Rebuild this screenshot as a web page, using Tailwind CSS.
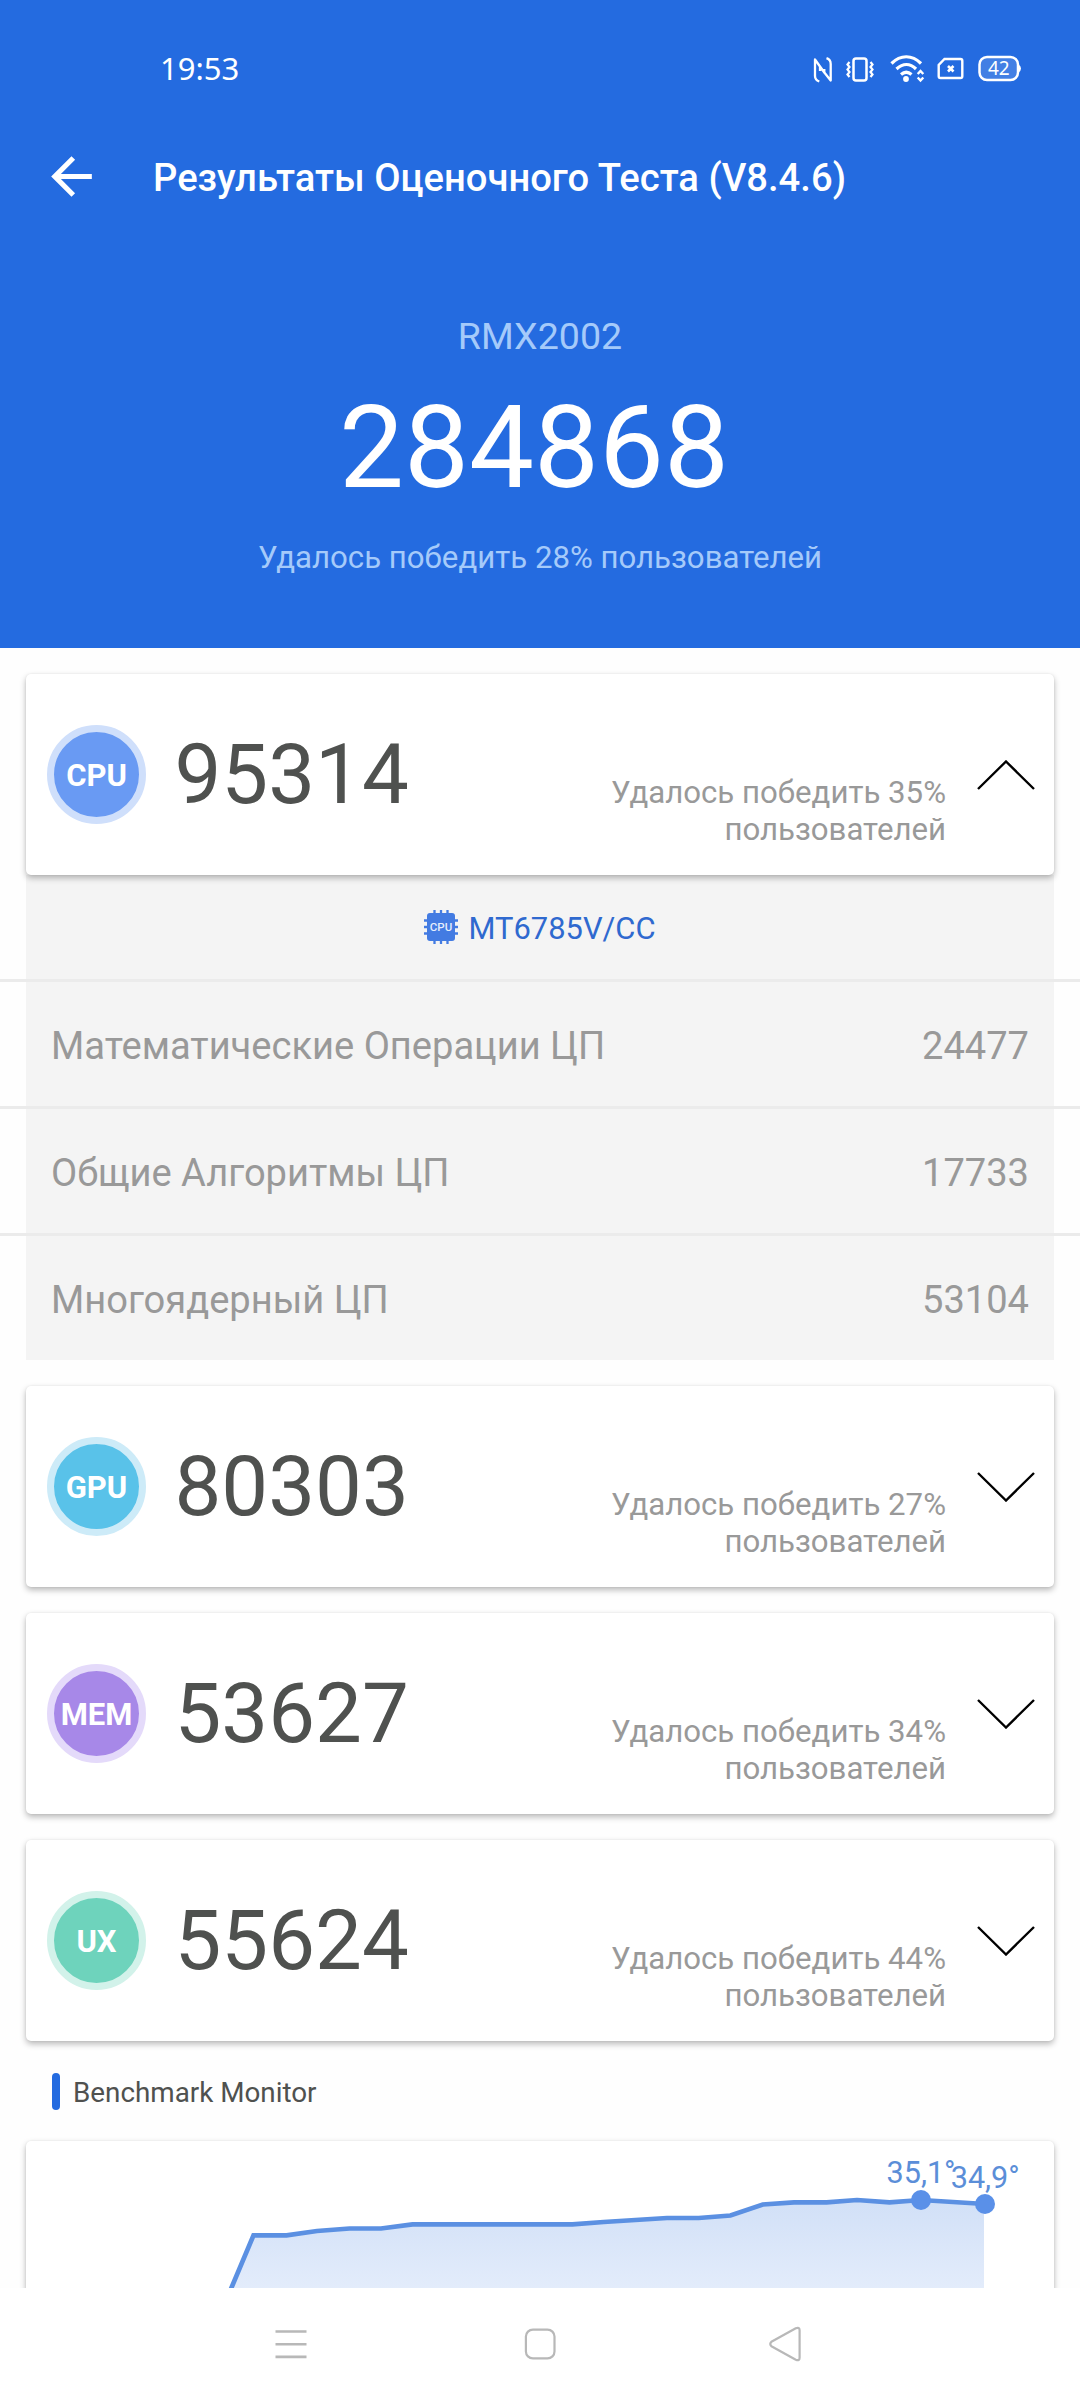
<!DOCTYPE html>
<html lang="ru">
<head>
<meta charset="utf-8">
<title>Результаты Оценочного Теста</title>
<script src="https://cdn.jsdelivr.net/npm/@tailwindcss/browser@4"></script>
</head>
<body class="bg-white font-['Roboto',sans-serif]">
<div class="flex h-[2400px] w-[1080px] flex-col overflow-hidden">
  <main class="h-[2288px] overflow-hidden bg-[#fefefe]">
    <header class="flex h-[648px] flex-col bg-[#246be0] text-white">
      <!-- Status bar -->
      <div class="flex h-[138px] items-center justify-between pr-[56px] pl-[160px]">
        <span class="pb-[2px] font-['Noto_Sans',sans-serif] text-[31px] leading-[40px]">19:53</span>
        <svg width="214" height="34" viewBox="810 52 214 34" fill="none" stroke="#fff" stroke-width="2">
          <path d="M819.300 81.500C816.500 80.500 815 79 815 76V59.500L824.300 72.500V69M826.500 58.200C829.300 59.200 830.700 61 830.700 64V80.500L820 67V71" stroke-width="2.300" stroke-linejoin="round"/>
          <rect x="853.500" y="58.500" width="13" height="22" rx="2.500" stroke-width="2.500"/>
          <path d="M849.500 62L847.500 64.500L849.500 67L847.500 69.500L849.500 72L847.500 74.500L849.500 77M870.500 62L872.500 64.500L870.500 67L872.500 69.500L870.500 72L872.500 74.500L870.500 77" stroke-width="2.200"/>
          <path d="M891.500 63.500C900.500 54.500 912 54.500 921 63.500M896.500 69C903 63 910 63 916 69M901 74.500C904.500 71.500 908 71.500 911.500 74.500" stroke-width="3.200"/>
          <circle cx="906" cy="79" r="2.900" fill="#fff" stroke="none"/>
          <path d="M917.700 74L920.500 71L923.300 74M917.700 77.500L920.500 80.500L923.300 77.500" stroke-width="2.400"/>
          <path d="M944.500 59H960.500Q962.300 59 962.300 60.800V76.200Q962.300 78 960.500 78H940.500Q938.700 78 938.700 76.200V65Z" stroke-width="2.400"/>
          <path d="M948 66L953.500 71.500M953.500 66L948 71.500" stroke-width="2.600"/>
          <rect x="979.500" y="57" width="38.500" height="23" rx="7.500" fill="#fff" fill-opacity=".14" stroke-width="2.500"/>
          <path d="M1018.500 64.500Q1021 66 1021 68.500T1018.500 72.500Z" fill="#fff" stroke="none"/>
          <text x="998.800" y="75.300" text-anchor="middle" font-family="Noto Sans, sans-serif" font-size="19" fill="#fff" stroke="none">42</text>
        </svg>
      </div>
      <!-- App bar -->
      <div class="flex h-[76px] items-center pl-[41px]">
        <svg class="size-[61px]" viewBox="0 0 24 24" fill="#fff"><path d="M20 11H7.830l5.590-5.590L12 4l-8 8 8 8 1.410-1.410L7.830 13H20v-2z"/></svg>
        <h1 class="pt-1 pl-[51px] text-[38.2px] leading-[46px] font-medium">Результаты Оценочного Теста (V8.4.6)</h1>
      </div>
      <!-- Total score -->
      <div class="flex flex-col items-center pt-[100px]">
        <p class="text-[37.6px] leading-[44px] text-[#a5cafa]">RMX2002</p>
        <p class="mt-[22px] pr-3 text-[115.7px] leading-[136px]">284868</p>
        <p class="mt-[23px] text-[31.2px] leading-[37px] text-[#a5cafa]">Удалось победить 28% пользователей</p>
      </div>
    </header>

    <section class="pt-[26px]">
      <article class="relative mx-[26px] flex h-[201px] items-center rounded-[5px] bg-white pr-[19.5px] pl-[20.5px] shadow-[0_3px_6px_rgba(0,0,0,0.28),0_0_2px_rgba(0,0,0,0.08)]">
        <div class="flex size-[99px] items-center justify-center rounded-full border-[7.5px] border-[#cfdffb] bg-[#699af3] pt-[3px] pl-px text-[31px] font-bold text-white">CPU</div>
        <div class="pl-[29px] text-[83.4px] leading-[98px] text-[#4f514f]">95314</div>
        <p class="mb-[27px] ml-auto self-end text-right text-[31.2px] leading-[37px] text-[#999]">Удалось победить 35%<br>пользователей</p>
        <svg class="ml-[30.5px]" width="58" height="30" viewBox="0 0 58 30" fill="none" stroke="#000" stroke-width="2.400"><path d="M1 29L29 1.500L57 29"/></svg>
      </article>

      <div class="bg-[linear-gradient(to_right,transparent_26px,#f4f4f4_26px,#f4f4f4_1054px,transparent_1054px)]">
        <div class="flex h-[104px] items-center justify-center gap-[10px]">
          <svg width="34" height="34" viewBox="0 0 34 34">
            <path d="M10.500 0V34M17 0V34M23.500 0V34M0 10.500H34M0 17H34M0 23.500H34" stroke="#437be2" stroke-width="2.300"/>
            <rect x="3" y="3" width="28" height="28" rx="3" fill="#437be2"/>
            <text x="17" y="21.200" text-anchor="middle" font-family="Roboto, sans-serif" font-weight="500" font-size="11.500" fill="#e6eefc">CPU</text>
          </svg>
          <span class="pt-[3px] text-[30.9px] leading-[37px] text-[#2f69cf]">MT6785V/CC</span>
        </div>
        <div class="flex h-[127px] items-center justify-between border-t-[3px] border-[#ebebeb] px-[51px] pt-[5px] text-[38.1px] leading-[45px] text-[#999]"><span>Математические Операции ЦП</span><span>24477</span></div>
        <div class="flex h-[127px] items-center justify-between border-t-[3px] border-[#ebebeb] px-[51px] pt-[5px] text-[38.1px] leading-[45px] text-[#999]"><span>Общие Алгоритмы ЦП</span><span>17733</span></div>
        <div class="flex h-[127px] items-center justify-between border-t-[3px] border-[#ebebeb] px-[51px] pt-[5px] text-[38.1px] leading-[45px] text-[#999]"><span>Многоядерный ЦП</span><span>53104</span></div>
      </div>

      <div class="mx-[26px] mt-[26px] flex flex-col gap-[26px]">
        <article class="flex h-[201px] items-center rounded-[5px] bg-white pr-[19.5px] pl-[20.5px] shadow-[0_3px_6px_rgba(0,0,0,0.28),0_0_2px_rgba(0,0,0,0.08)]">
          <div class="flex size-[99px] items-center justify-center rounded-full border-[7.5px] border-[#cdebf8] bg-[#59c2e9] pt-[3px] pl-px text-[31px] font-bold text-white">GPU</div>
          <div class="pl-[29px] text-[83.4px] leading-[98px] text-[#4f514f]">80303</div>
          <p class="mb-[27px] ml-auto self-end text-right text-[31.2px] leading-[37px] text-[#999]">Удалось победить 27%<br>пользователей</p>
          <svg class="ml-[30.5px]" width="58" height="30" viewBox="0 0 58 30" fill="none" stroke="#000" stroke-width="2.400"><path d="M1 1L29 28.500L57 1"/></svg>
        </article>
        <article class="flex h-[201px] items-center rounded-[5px] bg-white pr-[19.5px] pl-[20.5px] shadow-[0_3px_6px_rgba(0,0,0,0.28),0_0_2px_rgba(0,0,0,0.08)]">
          <div class="flex size-[99px] items-center justify-center rounded-full border-[7.5px] border-[#e4dafa] bg-[#a788e8] pt-[3px] pl-px text-[31px] font-bold text-white">MEM</div>
          <div class="pl-[29px] text-[83.4px] leading-[98px] text-[#4f514f]">53627</div>
          <p class="mb-[27px] ml-auto self-end text-right text-[31.2px] leading-[37px] text-[#999]">Удалось победить 34%<br>пользователей</p>
          <svg class="ml-[30.5px]" width="58" height="30" viewBox="0 0 58 30" fill="none" stroke="#000" stroke-width="2.400"><path d="M1 1L29 28.500L57 1"/></svg>
        </article>
        <article class="flex h-[201px] items-center rounded-[5px] bg-white pr-[19.5px] pl-[20.5px] shadow-[0_3px_6px_rgba(0,0,0,0.28),0_0_2px_rgba(0,0,0,0.08)]">
          <div class="flex size-[99px] items-center justify-center rounded-full border-[7.5px] border-[#d2f2ea] bg-[#6ed3bc] pt-[3px] pl-px text-[31px] font-bold text-white">UX</div>
          <div class="pl-[29px] text-[83.4px] leading-[98px] text-[#4f514f]">55624</div>
          <p class="mb-[27px] ml-auto self-end text-right text-[31.2px] leading-[37px] text-[#999]">Удалось победить 44%<br>пользователей</p>
          <svg class="ml-[30.5px]" width="58" height="30" viewBox="0 0 58 30" fill="none" stroke="#000" stroke-width="2.400"><path d="M1 1L29 28.500L57 1"/></svg>
        </article>
      </div>

      <div class="mt-[32px] flex h-[37px] items-center gap-[13px] pl-[52px]">
        <span class="h-[37px] w-2 rounded-full bg-[#246be0]"></span>
        <h2 class="pt-px text-[27.8px] leading-[33px] text-[#4f514f]">Benchmark Monitor</h2>
      </div>

      <!-- Temperature chart, continues below the fold -->
      <div class="mx-[26px] mt-[31px] h-[300px] rounded-[5px] bg-white shadow-[0_3px_6px_rgba(0,0,0,0.28),0_0_2px_rgba(0,0,0,0.08)]">
        <svg width="1028" height="147" viewBox="26 2141 1028 147">
          <defs><linearGradient id="heat" gradientUnits="userSpaceOnUse" x1="0" y1="2200" x2="0" y2="2288"><stop offset="0" stop-color="#d1e0f7"/><stop offset="1" stop-color="#e3ecfb"/></linearGradient></defs>
          <path d="M231 2289L253.500 2235.300H286.500L317 2231L349.500 2228.500H381L412.500 2224.400H572.400L603.700 2222L635.400 2220L667 2218H698.700L730.400 2215.500L762.800 2204.500L794 2202.300H826.500L857 2200L889.500 2202.300L921 2200L984 2204V2289Z" fill="url(#heat)"/>
          <path d="M230.500 2290L253.500 2235.300H286.500L317 2231L349.500 2228.500H381L412.500 2224.400H572.400L603.700 2222L635.400 2220L667 2218H698.700L730.400 2215.500L762.800 2204.500L794 2202.300H826.500L857 2200L889.500 2202.300L921 2200L985 2204" fill="none" stroke="#5b90e2" stroke-width="4.700"/>
          <circle cx="921" cy="2200" r="10" fill="#5a90e8"/>
          <circle cx="985" cy="2204" r="10" fill="#5a90e8"/>
          <g font-family="Roboto, sans-serif" font-size="30.600" fill="#5b8ed8">
            <text x="886.500" y="2183">35,1°</text>
            <text x="950.700" y="2187.500">34,9°</text>
          </g>
        </svg>
      </div>
    </section>
  </main>

  <!-- System navigation -->
  <nav class="flex h-28 items-center justify-between bg-white pr-[278px] pl-[275px]">
    <svg width="32" height="30" viewBox="0 0 32 30" stroke="#b8b8b8" stroke-width="2.600"><path d="M.5 2.500H31.500M.5 15.200H31.500M.5 27.900H31.500"/></svg>
    <svg class="ml-[3px]" width="32" height="32" viewBox="0 0 32 32" fill="none" stroke="#b8b8b8" stroke-width="2.200"><rect x="1.900" y="1.600" width="28.600" height="28.800" rx="7"/></svg>
    <svg width="33" height="36" viewBox="0 0 33 36" fill="none" stroke="#b8b8b8" stroke-width="2.200" stroke-linejoin="round"><path d="M2.400 15.800L26.800 2.300Q30.600 .8 30.600 4.300V31.700Q30.600 35.200 26.800 33.700L2.400 20.200Q.2 18 2.400 15.800Z"/></svg>
  </nav>
</div>
</body>
</html>
